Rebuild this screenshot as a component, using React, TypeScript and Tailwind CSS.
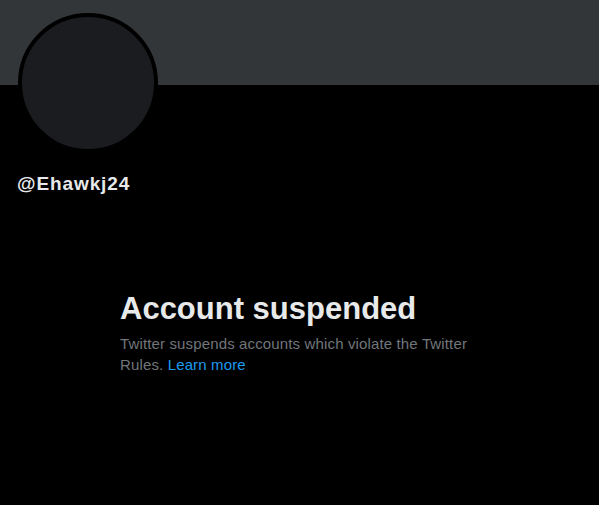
export default function App() {
  return (
    <div className="min-h-[505px] w-full bg-black font-['Liberation_Sans',Arial,sans-serif]">
      <div className="h-[85px] bg-[#333639]" />
      <div className="px-[18px]">
        <div className="relative -mt-[72px] h-[140px] w-[140px] rounded-full border-4 border-black bg-[#1a1c20]" />
        <div className="mt-[20px] -ml-px text-[19px] font-bold leading-[22px] tracking-[0.9px] text-[#e7e9ea]">
          @Ehawkj24
        </div>
      </div>
      <div className="ml-[120px] mt-[96px] w-[360px]">
        <h1 className="text-[31px] font-bold leading-9 text-[#e7e9ea]">
          Account suspended
        </h1>
        <p className="mt-[6px] text-[15px] leading-[21px] tracking-[0.14px] text-[#71767b]">
          Twitter suspends accounts which violate the Twitter Rules.{" "}
          <a href="#" className="text-[#1d9bf0]">
            Learn more
          </a>
        </p>
      </div>
    </div>
  );
}
